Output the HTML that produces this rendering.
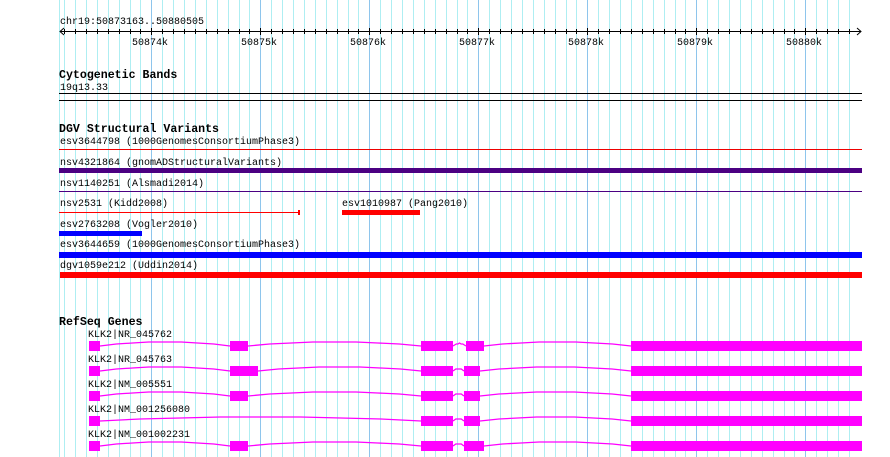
<!DOCTYPE html>
<html><head><style>
html,body{margin:0;padding:0;background:#fff;}
svg{display:block;}
text{font-family:"Liberation Mono",monospace;font-size:10px;fill:#000;}
.b{font-weight:bold;font-size:11.6px;}
</style></head><body>
<svg id="s" width="890" height="457" viewBox="0 0 890 457" xmlns="http://www.w3.org/2000/svg" shape-rendering="crispEdges">
<rect width="890" height="457" fill="#fff"/>
<g id="grid"></g>
<!-- ruler -->
<text x="60" y="24">chr19:50873163..50880505</text>
<line x1="60" y1="31.5" x2="861" y2="31.5" stroke="#000"/>
<polyline points="64,28 60,31.5 64,35" fill="none" stroke="#000" shape-rendering="auto"/>
<polyline points="857,28 861,31.5 857,35" fill="none" stroke="#000" shape-rendering="auto"/>
<g id="ticks"></g>
<text x="132" y="45">50874k</text>
<text x="241" y="45">50875k</text>
<text x="350" y="45">50876k</text>
<text x="459" y="45">50877k</text>
<text x="568" y="45">50878k</text>
<text x="677" y="45">50879k</text>
<text x="786" y="45">50880k</text>

<text class="b" x="59" y="78">Cytogenetic Bands</text>
<text x="60" y="90">19q13.33</text>
<rect x="59" y="93" width="803" height="1" fill="#000"/>
<rect x="59" y="100" width="803" height="1" fill="#000"/>

<text class="b" x="59" y="132">DGV Structural Variants</text>
<text x="60" y="144">esv3644798 (1000GenomesConsortiumPhase3)</text>
<rect x="59" y="149" width="803" height="1" fill="#e00"/>
<text x="60" y="165">nsv4321864 (gnomADStructuralVariants)</text>
<rect x="59" y="168" width="803" height="5" fill="#4b0082"/>
<text x="60" y="186">nsv1140251 (Alsmadi2014)</text>
<rect x="59" y="191" width="803" height="1" fill="#4b0082"/>
<text x="60" y="206">nsv2531 (Kidd2008)</text>
<rect x="59" y="212" width="240" height="1" fill="#f00"/>
<rect x="298" y="210" width="2" height="5" fill="#f00"/>
<text x="342" y="206">esv1010987 (Pang2010)</text>
<rect x="342" y="210" width="78" height="5" fill="#f00"/>
<text x="60" y="227">esv2763208 (Vogler2010)</text>
<rect x="59" y="231" width="83" height="5" fill="#00f"/>
<text x="60" y="247">esv3644659 (1000GenomesConsortiumPhase3)</text>
<rect x="59" y="252" width="803" height="6" fill="#00f"/>
<text x="60" y="268">dgv1059e212 (Uddin2014)</text>
<rect x="60" y="272" width="802" height="6" fill="#f00"/>

<text class="b" x="59" y="325">RefSeq Genes</text>
<g id="genes"></g>
</svg>
<script>
var ns="http://www.w3.org/2000/svg";
function el(p,t,a){var e=document.createElementNS(ns,t);for(var k in a)e.setAttribute(k,a[k]);p.appendChild(e);return e;}
var g=document.getElementById('grid'),tk=document.getElementById('ticks');
el(g,'rect',{x:59,y:0,width:1,height:457,fill:'#aeeef2'});
for(var i=-9;i<=64;i++){var x=Math.round(151.3+i*10.9);if(x<61||x>861)continue;
 var maj=(i%10===0);
 el(g,'rect',{x:x,y:0,width:1,height:457,fill:maj?'#8ec5ec':'#aeeef2'});
 el(tk,'rect',{x:x,y:maj?28:29,width:1,height:maj?7:5,fill:'#000'});
}
var G=document.getElementById('genes');
var labels=['KLK2|NR_045762','KLK2|NR_045763','KLK2|NM_005551','KLK2|NM_001256080','KLK2|NM_001002231'];
var ex=[
 [[89,100],[230,248],[421,453],[466,484],[631,862]],
 [[89,100],[230,258],[421,453],[464,480],[631,862]],
 [[89,100],[230,248],[421,453],[464,480],[631,862]],
 [[89,100],[421,453],[464,480],[631,862]],
 [[89,100],[230,248],[421,453],[464,484],[631,862]]];
for(var r=0;r<5;r++){
 var y=341+r*25;
 el(G,'text',{x:88,y:y-4}).textContent=labels[r];
 var e=ex[r];
 for(var j=0;j<e.length;j++){
  el(G,'rect',{x:e[j][0],y:y,width:e[j][1]-e[j][0],height:10,fill:'#f0f'});
  if(j<e.length-1){
   var a=e[j][1],b=e[j+1][0],cy=y+5,w=b-a,h=Math.min(4,w/8+1);
   var pts=[];
   for(var k=0;k<=8;k++){var xx=a+w*k/8;var yy=cy-h*Math.sin(Math.PI*k/8);pts.push(xx.toFixed(1)+','+Math.round(yy));}
   el(G,'polyline',{points:pts.join(' '),fill:'none',stroke:'#f0f','stroke-width':1.3,'shape-rendering':'auto'});
  }
 }
}
</script>
</body></html>
